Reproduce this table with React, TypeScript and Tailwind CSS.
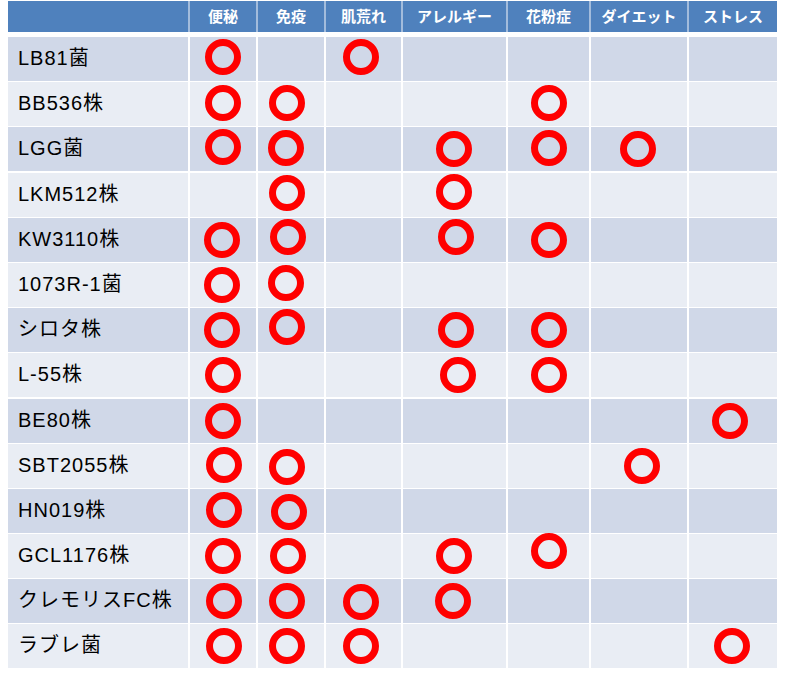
import React from "react";

const cols = ["便秘", "免疫", "肌荒れ", "アレルギー", "花粉症", "ダイエット", "ストレス"];

type Mark = [number, number, number];
const rows: [string, Mark[]][] = [
  ["LB81菌", [[1, 0, -2], [3, -3, -2]]],
  ["BB536株", [[1, 0, -1], [2, -4, -1], [5, 0, -1]]],
  ["LGG菌", [[1, 0, -2], [2, -5, -1], [4, -1, 0], [5, 0, -1], [6, -1, 0]]],
  ["LKM512株", [[2, -4, -2], [4, -1, -3]]],
  ["KW3110株", [[1, -1, 0], [2, -3, -3], [4, 1, -3], [5, 0, 0]]],
  ["1073R-1菌", [[1, -1, 0], [2, -5, -2]]],
  ["シロタ株", [[1, -1, 0], [2, -4, -3], [4, 1, 0], [5, 0, 0]]],
  ["L-55株", [[1, 0, 0], [4, 3, 0], [5, 0, 0]]],
  ["BE80株", [[1, 0, 0], [7, -3, 0]]],
  ["SBT2055株", [[1, 1, -1], [2, -4, 1], [6, 3, 0]]],
  ["HN019株", [[1, 1, -1], [2, -2, 1]]],
  ["GCL1176株", [[1, 0, 0], [2, -3, 0], [4, -1, 0], [5, 0, -5]]],
  ["クレモリスFC株", [[1, 1, 0], [2, -4, 0], [3, -3, 1], [4, -2, 0]]],
  ["ラブレ菌", [[1, 1, 0], [2, -4, 0], [3, -3, 0], [7, -1, 0]]],
];

const grid = "grid grid-cols-[180px_66px_66px_75px_103px_81px_96px_88px] gap-x-[2px]";

function Circle({ dx, dy }: { dx: number; dy: number }) {
  return (
    <div
      className="w-[36px] h-[36px] rounded-full border-[7px] border-[#ff0000]"
      style={{ transform: `translate(${dx}px, ${dy}px)` }}
    />
  );
}

export default function App() {
  return (
    <div className="w-[787px] h-[677px] bg-white pt-[1px] pl-[8px] font-['Liberation_Sans','Noto_Sans_CJK_JP',sans-serif]">
      <div className={`${grid} w-[769px] h-[31px] bg-[#a3bcdc]`}>
        <div className="bg-[#4f81bd]" />
        {cols.map((c) => (
          <div
            key={c}
            className="bg-[#4f81bd] flex items-center justify-center text-white text-[15px] font-bold font-['Noto_Sans_CJK_JP',sans-serif]"
          >
            {c}
          </div>
        ))}
      </div>
      <div className="mt-[5px] flex flex-col gap-y-[1.2px] w-[769px]">
        {rows.map(([name, marks], i) => {
          const bg = i % 2 === 0 ? "bg-[#d0d8e8]" : "bg-[#e9edf4]";
          return (
            <div key={name} className={`${grid} h-[44px]`}>
              <div className={`${bg} flex items-center pl-[10px] pb-[2px] text-[20px] tracking-[1px] text-black leading-none`}>
                {name}
              </div>
              {cols.map((_, ci) => {
                const m = marks.find((mk) => mk[0] === ci + 1);
                return (
                  <div key={ci} className={`${bg} flex items-center justify-center`}>
                    {m && <Circle dx={m[1]} dy={m[2]} />}
                  </div>
                );
              })}
            </div>
          );
        })}
      </div>
    </div>
  );
}
